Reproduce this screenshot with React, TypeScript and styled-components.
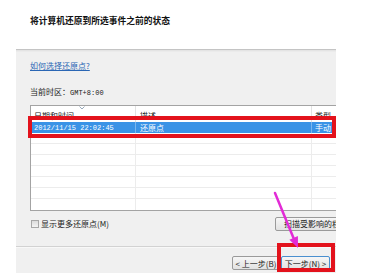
import React from "react";
import styled, { createGlobalStyle } from "styled-components";

const Global = createGlobalStyle`
  html, body { margin: 0; padding: 0; background: #ffffff; }
  body { font-family: "Noto Sans CJK SC", "Noto Sans", sans-serif; color: #1e1e1e; }
`;

const cjk = `"Noto Sans CJK SC", "Noto Sans", sans-serif`;
const mono = `"Liberation Mono", "Noto Sans CJK SC", monospace`;

const Screen = styled.div`
  position: relative;
  width: 392px;
  height: 273px;
  overflow: hidden;
  background: #ffffff;
  display: flex;
  flex-direction: column;
`;

const Header = styled.div`
  height: 49px;
  box-sizing: border-box;
  padding: 15px 0 0 30px;
`;

const Title = styled.div`
  font-family: ${cjk};
  font-weight: 700;
  font-size: 8.75px;
  line-height: 12px;
  color: #111;
`;

const Panel = styled.div`
  margin-left: 16px;
  width: 320px;
  flex: 1;
  display: flex;
  flex-direction: column;
  background: #f0f0f0;
  border-top: 1px solid #c4c4c4;
  box-shadow: inset 0 1px 0 #e4e4e4, inset 0 2px 0 #ebebeb;
  overflow: hidden;
`;

const Body = styled.div`
  height: 196px;
  box-sizing: border-box;
  padding: 10px 0 0 14px;
  display: flex;
  flex-direction: column;
`;

const HelpLink = styled.a`
  font-family: ${cjk};
  font-size: 8px;
  line-height: 12px;
  color: #2a66b4;
  text-decoration: underline;
  align-self: flex-start;
`;

const TimeZone = styled.div`
  margin-top: 14px;
  font-family: ${cjk};
  font-size: 8px;
  line-height: 12px;
  color: #222;
`;

const Mono = styled.span`
  font-family: ${mono};
  font-size: 7px;
`;

const Table = styled.div`
  margin-top: 6px;
  width: 340px;
  height: 106px;
  box-sizing: border-box;
  border: 1px solid #a3a3a3;
  background: #ffffff;
  display: flex;
  flex-direction: column;
`;

const Row = styled.div<{ $h: number; $selected?: boolean; $line?: boolean }>`
  display: grid;
  grid-template-columns: 104px 176px 1fr;
  height: ${(p) => p.$h}px;
  flex: none;
  box-sizing: border-box;
  background: ${(p) => (p.$selected ? "#3a93e6" : "transparent")};
  color: ${(p) => (p.$selected ? "#ffffff" : "#222")};
  border-bottom: ${(p) => (p.$line ? "1px solid #ececec" : "none")};
`;

const Cell = styled.div<{ $mono?: boolean; $divider?: string; $align?: string }>`
  position: relative;
  padding-left: 3px;
  font-family: ${(p) => (p.$mono ? mono : cjk)};
  font-size: ${(p) => (p.$mono ? "7px" : "8px")};
  display: flex;
  align-items: ${(p) => p.$align || "center"};
  white-space: nowrap;
  overflow: hidden;
  border-left: ${(p) => (p.$divider ? `1px solid ${p.$divider}` : "none")};
`;

const SortMark = styled.svg`
  position: absolute;
  left: 48px;
  top: 0px;
`;

const Options = styled.div`
  margin-top: 5px;
  height: 15px;
  display: flex;
  align-items: center;
`;

const CheckLabel = styled.label`
  display: flex;
  align-items: center;
  gap: 2px;
  font-family: ${cjk};
  font-size: 8px;
  color: #222;
`;

const Box = styled.span`
  width: 8px;
  height: 8px;
  box-sizing: border-box;
  margin-left: 1px;
  border: 1px solid #a8a8a8;
  background: linear-gradient(#dcdcdc, #f4f4f4);
`;

const Button = styled.button<{ $default?: boolean; $w: number }>`
  width: ${(p) => p.$w}px;
  height: 14px;
  flex: none;
  padding: 0;
  box-sizing: border-box;
  border: 1px solid ${(p) => (p.$default ? "#4a8fcf" : "#9a9a9a")};
  border-radius: 2px;
  background: linear-gradient(#f6f6f6, #e2e2e2);
  font-family: ${cjk};
  font-size: 8px;
  color: #222;
  display: flex;
  align-items: center;
  justify-content: center;
  white-space: nowrap;
`;

const ScanButton = styled(Button)`
  margin-left: auto;
  margin-right: -24px;
  justify-content: flex-start;
  padding-left: 8px;
`;

const Footer = styled.div`
  flex: 1;
  border-top: 1px solid #d2d2d2;
  box-shadow: inset 0 1px 0 #f8f8f8;
  padding: 9px 6px 0 0;
  display: flex;
  justify-content: flex-end;
  gap: 1px;
`;

const RedBox = styled.div<{ $l: number; $t: number; $w: number; $h: number }>`
  position: absolute;
  left: ${(p) => p.$l}px;
  top: ${(p) => p.$t}px;
  width: ${(p) => p.$w}px;
  height: ${(p) => p.$h}px;
  box-sizing: border-box;
  border: 4px solid #e3121c;
  pointer-events: none;
`;

const Arrow = styled.svg`
  position: absolute;
  left: 260px;
  top: 185px;
`;

const rows = [0, 1, 2, 3, 4, 5, 6, 7];

export default function App() {
  return (
    <Screen>
      <Global />
      <Header>
        <Title>将计算机还原到所选事件之前的状态</Title>
      </Header>
      <Panel>
        <Body>
          <HelpLink href="#">如何选择还原点?</HelpLink>
          <TimeZone>
            当前时区：<Mono>GMT+8:00</Mono>
          </TimeZone>
          <Table>
            <Row $h={16}>
              <Cell $align="flex-end" style={{ paddingBottom: 1 }}>
                日期和时间
                <SortMark width="6" height="4" viewBox="0 0 6 4">
                  <path d="M0.5 0.5 L3 3 L5.5 0.5" fill="none" stroke="#9ab" strokeWidth="1" />
                </SortMark>
              </Cell>
              <Cell $align="flex-end" $divider="#e2e2e2" style={{ paddingLeft: 4, paddingBottom: 1 }}>
                描述
              </Cell>
              <Cell $align="flex-end" $divider="#e2e2e2" style={{ paddingBottom: 1 }}>
                类型
              </Cell>
            </Row>
            {rows.map((i) =>
              i === 0 ? (
                <Row key={i} $h={11} $selected>
                  <Cell $mono>2012/11/15 22:02:45</Cell>
                  <Cell $divider="#7ab6ee" style={{ paddingLeft: 4 }}>
                    还原点
                  </Cell>
                  <Cell $divider="#7ab6ee">手动</Cell>
                </Row>
              ) : (
                <Row key={i} $h={11} $line={i < 7}>
                  <Cell />
                  <Cell $divider="#ececec" />
                  <Cell $divider="#ececec" />
                </Row>
              )
            )}
          </Table>
          <Options>
            <CheckLabel>
              <Box />
              显示更多还原点(M)
            </CheckLabel>
            <ScanButton $w={85}>扫描受影响的程序(P)</ScanButton>
          </Options>
        </Body>
        <Footer>
          <Button $w={48}>&lt; 上一步(B)</Button>
          <Button $w={49} $default>
            下一步(N) &gt;
          </Button>
        </Footer>
      </Panel>
      <RedBox $l={28} $t={116} $w={308} $h={22} />
      <RedBox $l={277} $t={243} $w={58} $h={29} />
      <Arrow width="50" height="70" viewBox="0 0 50 70">
        <line x1="15" y1="8" x2="33.5" y2="53" stroke="#e22bd6" strokeWidth="2.5" strokeLinecap="round" />
        <polygon points="38,63 29.4,54.8 37.9,51.1" fill="#e22bd6" />
      </Arrow>
    </Screen>
  );
}
